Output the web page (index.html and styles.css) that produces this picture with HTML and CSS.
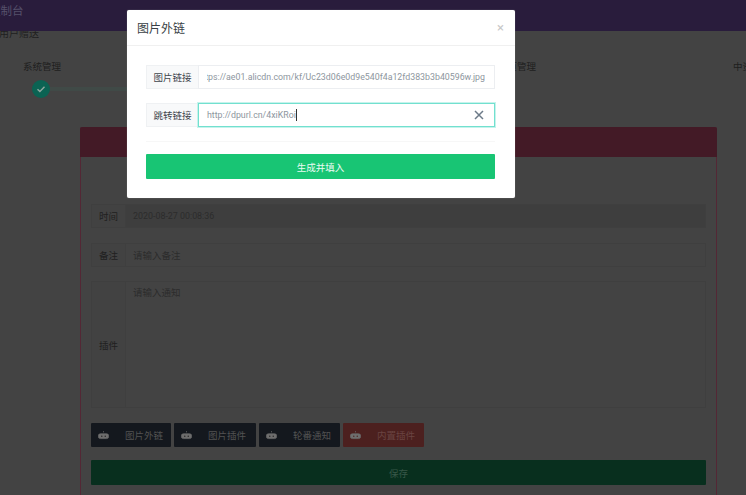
FILE: index.html
```html
<!DOCTYPE html>
<html lang="zh">
<head>
<meta charset="utf-8">
<title>图片外链</title>
<link rel="stylesheet" href="styles.css">
</head>
<body>
<div class="page">
  <header class="topbar"><span class="brand">控制台</span></header>
  <div class="crumb">用户赠送</div>
  <div class="steps">
    <div class="step step-first">
      <span class="step-name">系统管理</span>
      <div class="step-track">
        <span class="step-dot"><svg viewBox="0 0 18 18" width="18" height="18"><path d="M5.5 9.2l2.4 2.4 4.6-4.8" fill="none" stroke="#8fa8a0" stroke-width="1.4"/></svg></span>
        <span class="step-line"></span>
      </div>
    </div>
    <span class="step-name step-mid">页管理</span>
    <span class="step-name step-last">中资</span>
  </div>
  <section class="card">
    <div class="card-head"></div>
    <div class="card-body">
      <div class="row row-disabled"><span class="row-label">时间</span><span class="row-value row-date">2020-08-27 00:08:36</span></div>
      <div class="row row-note"><span class="row-label">备注</span><span class="row-value">请输入备注</span></div>
      <div class="row row-area"><span class="row-label">插件</span><span class="row-value">请输入通知</span></div>
      <div class="tools">
        <button class="tool tool-w80"><span class="tool-icon"><svg viewBox="0 0 16 16" width="11" height="11"><path d="M8 1.5v2M3.5 5.5h9a3 3 0 0 1 3 3v1a3 3 0 0 1-3 3h-9a3 3 0 0 1-3-3v-1a3 3 0 0 1 3-3z" fill="#6e6e6e" stroke="#6e6e6e"/><circle cx="5.5" cy="9" r="1" fill="#222"/><circle cx="10.5" cy="9" r="1" fill="#222"/></svg></span><span class="tool-text">图片外链</span></button>
        <button class="tool"><span class="tool-icon"><svg viewBox="0 0 16 16" width="11" height="11"><path d="M8 1.5v2M3.5 5.5h9a3 3 0 0 1 3 3v1a3 3 0 0 1-3 3h-9a3 3 0 0 1-3-3v-1a3 3 0 0 1 3-3z" fill="#6e6e6e" stroke="#6e6e6e"/><circle cx="5.5" cy="9" r="1" fill="#222"/><circle cx="10.5" cy="9" r="1" fill="#222"/></svg></span><span class="tool-text">图片插件</span></button>
        <button class="tool tool-w81"><span class="tool-icon"><svg viewBox="0 0 16 16" width="11" height="11"><path d="M8 1.5v2M3.5 5.5h9a3 3 0 0 1 3 3v1a3 3 0 0 1-3 3h-9a3 3 0 0 1-3-3v-1a3 3 0 0 1 3-3z" fill="#6e6e6e" stroke="#6e6e6e"/><circle cx="5.5" cy="9" r="1" fill="#222"/><circle cx="10.5" cy="9" r="1" fill="#222"/></svg></span><span class="tool-text">轮番通知</span></button>
        <button class="tool tool-red"><span class="tool-icon"><svg viewBox="0 0 16 16" width="11" height="11"><path d="M8 1.5v2M3.5 5.5h9a3 3 0 0 1 3 3v1a3 3 0 0 1-3 3h-9a3 3 0 0 1-3-3v-1a3 3 0 0 1 3-3z" fill="#6e6e6e" stroke="#6e6e6e"/><circle cx="5.5" cy="9" r="1" fill="#4c201f"/><circle cx="10.5" cy="9" r="1" fill="#4c201f"/></svg></span><span class="tool-text">内置插件</span></button>
      </div>
      <button class="save">保存</button>
    </div>
  </section>
</div>

<div class="modal">
  <div class="modal-head">
    <span class="modal-title">图片外链</span>
    <span class="modal-close">×</span>
  </div>
  <div class="modal-body">
    <div class="field">
      <span class="field-label">图片链接</span>
      <div class="field-input"><span class="field-clip"><span>https://ae01.alicdn.com/kf/Uc23d06e0d9e540f4a12fd383b3b40596w.jpg</span></span></div>
    </div>
    <div class="field">
      <span class="field-label">跳转链接</span>
      <div class="field-input field-focus">
        <span class="field-typed">http://dpurl.cn/4xiKRoi</span><span class="caret"></span>
        <svg class="field-clear" viewBox="0 0 10 10" width="10" height="10"><path d="M1 1l8 8M9 1l-8 8" stroke="#6c7a88" stroke-width="1.5" fill="none"/></svg>
      </div>
    </div>
    <div class="modal-rule"></div>
    <button class="submit">生成并填入</button>
  </div>
</div>
</body>
</html>
```

FILE: styles.css
```css
* { box-sizing: border-box; }
html, body { margin: 0; height: 100%; overflow: hidden; }
body {
  background: #434343;
  font-family: "Roboto", "Noto Sans CJK SC", sans-serif;
  font-size: 9.5px;
  color: #202020;
}
button { font: inherit; border: 0; padding: 0; }

.page { height: 495px; overflow: hidden; display: flex; flex-direction: column; }
.topbar {
  height: 31px; flex: none; background: #291c3c; color: #55506a;
  font-size: 11.5px; line-height: 23px; margin-bottom: -3px; position: relative; z-index: 1;
}
.brand { display: block; margin-left: -11px; }
.crumb { height: 12px; flex: none; line-height: 12px; font-size: 10px; margin-left: -1px; color: #1f1f1f; }

.steps { height: 87px; flex: none; position: relative; padding: 20px 0 0 23px; }
.step-first { width: 300px; }
.step-name { display: block; line-height: 14px; color: #1e1e1e; font-size: 9.5px; }
.step-track { display: flex; align-items: center; margin: 6px 0 0 9px; }
.step-dot { width: 18px; height: 18px; border-radius: 50%; background: #0b6353; flex: none; display: block; }
.step-line { flex: 1; height: 4px; background: #404a47; }
.step-mid { position: absolute; left: 507.5px; top: 20px; }
.step-last { position: absolute; left: 733px; top: 20px; white-space: nowrap; }

.card { margin-left: 80px; width: 637px; flex: none; border: 1px solid #542735; border-top: 0; border-radius: 2px 2px 0 0; }
.card-head { height: 30px; margin: 0 -1px; background: #431a26; border-radius: 2px 2px 0 0; }
.card-body { padding: 47px 10px 30px; }

.row { display: flex; height: 24px; border: 1px solid #3f3f3f; margin-bottom: 15px; font-size: 9.5px; }
.row-note { margin-bottom: 14px; }
.row-disabled { background: #3e3e3e; }
.row-label { width: 34px; flex: none; display: flex; align-items: center; justify-content: center; border-right: 1px solid #3f3f3f; color: #202020; background: #424242; }
.row-value { padding-left: 7px; display: flex; align-items: center; color: #2c2c2c; }
.row-date { font-size: 8.9px; }
.row-area { height: 127px; }
.row-area .row-value { align-items: flex-start; padding-top: 3px; }

.tools { display: flex; gap: 3px; margin-bottom: 13px; }
.tool { width: 82px; height: 24px; display: flex; align-items: center; background: #14181e; border-radius: 1px; color: #525252; }
.tool-w80 { width: 80px; }
.tool-w81 { width: 81px; }
.tool-red { background: #4c201f; width: 81px; color: #6a4442; }
.tool-icon { width: 24px; flex: none; display: flex; justify-content: center; }
.tool-text { margin-left: 10px; white-space: nowrap; }
.save { display: block; width: 100%; height: 25px; background: #082f1e; color: #375748; border-radius: 1px; }

.modal {
  position: absolute; z-index: 10; left: 127px; top: 10px; width: 388px; height: 188px;
  background: #fff; border-radius: 2px; color: #444; box-shadow: 0 0 1px #9a9a9a;
}
.modal-head {
  height: 36px; border-bottom: 1px solid #f0f0f0; display: flex; align-items: center;
  justify-content: space-between; padding: 0 11px 0 10px;
}
.modal-title { font-size: 12px; color: #3a3f45; }
.modal-close { font-size: 13px; line-height: 13px; color: #c8c8c8; }
.modal-body { padding: 19px 20px 0 19px; }
.field { display: flex; height: 24px; margin-bottom: 14px; }
.field-label {
  width: 52px; flex: none; display: flex; align-items: center; justify-content: center;
  background: #f8f9fa; border: 1px solid #eff1f3; border-right: 0; color: #3f464d;
}
.field-input {
  flex: 1; min-width: 0; display: flex; align-items: center; padding: 0 9px 0 8px;
  border: 1px solid #eceef1; color: #8d969e; background: #fff; font-size: 8.8px;
}
.field-clip { flex: 1; min-width: 0; overflow: hidden; display: flex; justify-content: flex-end; white-space: nowrap; }
.field-clip span { flex: none; }
.field-focus { border: 1px solid #72e0cf; box-shadow: 0 0 0 1px #c6f3ec; }
.field-typed { white-space: nowrap; }
.caret { width: 1px; height: 12px; background: #333; flex: none; }
.field-clear { margin-left: auto; margin-right: 1px; }
.modal-rule { height: 1px; background: #f7f7f7; margin-bottom: 12px; }
.submit { display: block; width: 100%; height: 25px; background: #18c574; color: #e9fbf2; font-size: 9.5px; border-radius: 1px; }
```
